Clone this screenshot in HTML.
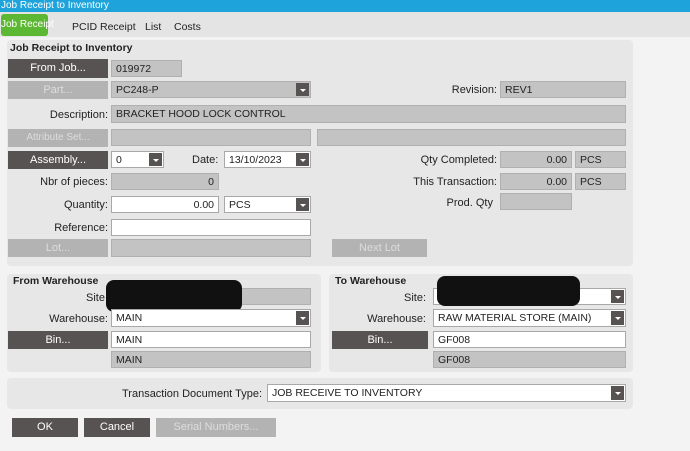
<!DOCTYPE html>
<html><head><style>
*{margin:0;padding:0;box-sizing:border-box}
body{width:690px;height:451px;overflow:hidden;background:#f3f3f3;font-family:"Liberation Sans",sans-serif;font-size:11px;color:#222;position:relative}
div{position:absolute;white-space:nowrap}
.pn{background:#e7e7e7;border-radius:4px}
.b{background:#575352;color:#fff;text-align:center;line-height:18px}
.lb{background:#b3b3b3;color:#ddd;text-align:center;line-height:18px}
.f{background:#c3c3c3;border:1px solid #b0b0b0;padding-left:4px;line-height:16px;font-size:10.5px}
.w{background:#fff;border:1px solid #a8a8a8;padding-left:4px;line-height:16px;font-size:10.5px}
.r{text-align:right;padding-right:4px}
.l{text-align:right;white-space:nowrap}
.a{right:1px;top:1px;bottom:1px;width:13px;background:#575352}
.a:after{content:"";position:absolute;left:4px;top:6px;border:3px solid transparent;border-top:3px solid #fff}
.h{font-weight:bold;font-size:10.5px}
.x{background:#111;border-radius:8px}
</style></head><body>
<div style="left:0;top:0;width:690px;height:12px;background:#1fa3db;color:#fff;font-size:10px;line-height:11px;padding-left:1px">Job Receipt to Inventory</div>
<div style="left:0;top:12px;width:690px;height:25px;background:#e4e4e4"></div>
<div style="left:1px;top:14px;width:47px;height:22px;background:#5cb833;border-radius:3px;color:#fff;line-height:21px;text-align:center;font-size:10px">Job Receipt</div>
<div style="left:72px;top:21px;font-size:10.5px">PCID Receipt</div>
<div style="left:145px;top:21px;font-size:10.5px">List</div>
<div style="left:174px;top:21px;font-size:10.5px">Costs</div>

<div class="pn" style="left:7px;top:40px;width:626px;height:226px"></div>
<div class="h" style="left:10px;top:42px">Job Receipt to Inventory</div>
<div class="b" style="left:8px;top:59px;width:100px;height:19px">From Job...</div>
<div class="f" style="left:111px;top:60px;width:71px;height:17px">019972</div>
<div class="lb" style="left:8px;top:81px;width:100px;height:18px">Part...</div>
<div class="f" style="left:111px;top:81px;width:200px;height:17px">PC248-P<div class="a"></div></div>
<div class="l" style="left:400px;top:84px;width:97px">Revision:</div>
<div class="f" style="left:500px;top:81px;width:126px;height:17px">REV1</div>
<div class="l" style="left:0;top:109px;width:108px">Description:</div>
<div class="f" style="left:111px;top:105px;width:515px;height:18px">BRACKET HOOD LOCK CONTROL</div>
<div class="lb" style="left:8px;top:129px;width:100px;height:18px;font-size:10px">Attribute Set...</div>
<div class="f" style="left:111px;top:129px;width:200px;height:17px"></div>
<div class="f" style="left:317px;top:129px;width:309px;height:17px"></div>
<div class="b" style="left:8px;top:151px;width:100px;height:18px">Assembly...</div>
<div class="w" style="left:111px;top:151px;width:53px;height:17px">0<div class="a"></div></div>
<div style="left:192px;top:154px">Date:</div>
<div class="w" style="left:224px;top:151px;width:87px;height:17px">13/10/2023<div class="a"></div></div>
<div class="l" style="left:380px;top:154px;width:117px">Qty Completed:</div>
<div class="f r" style="left:500px;top:151px;width:72px;height:17px">0.00</div>
<div class="f" style="left:575px;top:151px;width:51px;height:17px">PCS</div>
<div class="l" style="left:0;top:176px;width:108px">Nbr of pieces:</div>
<div class="f r" style="left:111px;top:173px;width:108px;height:17px">0</div>
<div class="l" style="left:380px;top:176px;width:117px">This Transaction:</div>
<div class="f r" style="left:500px;top:173px;width:72px;height:17px">0.00</div>
<div class="f" style="left:575px;top:173px;width:51px;height:17px">PCS</div>
<div class="l" style="left:380px;top:197px;width:113px">Prod. Qty</div>
<div class="f" style="left:500px;top:193px;width:72px;height:17px"></div>
<div class="l" style="left:0;top:199px;width:108px">Quantity:</div>
<div class="w r" style="left:111px;top:196px;width:108px;height:17px">0.00</div>
<div class="w" style="left:224px;top:196px;width:87px;height:17px">PCS<div class="a"></div></div>
<div class="l" style="left:0;top:222px;width:108px">Reference:</div>
<div class="w" style="left:111px;top:219px;width:200px;height:17px"></div>
<div class="lb" style="left:8px;top:239px;width:100px;height:18px">Lot...</div>
<div class="f" style="left:111px;top:239px;width:200px;height:18px"></div>
<div class="lb" style="left:332px;top:239px;width:95px;height:18px">Next Lot</div>

<div class="pn" style="left:7px;top:274px;width:314px;height:98px"></div>
<div class="h" style="left:13px;top:275px">From Warehouse</div>
<div class="l" style="left:0;top:292px;width:108px">Site:</div>
<div class="f" style="left:111px;top:288px;width:200px;height:17px"></div>
<div class="x" style="left:106px;top:280px;width:136px;height:32px"></div>
<div class="l" style="left:0;top:313px;width:108px">Warehouse:</div>
<div class="w" style="left:111px;top:309px;width:200px;height:18px">MAIN<div class="a"></div></div>
<div class="b" style="left:8px;top:331px;width:100px;height:18px">Bin...</div>
<div class="w" style="left:111px;top:331px;width:200px;height:17px">MAIN</div>
<div class="f" style="left:111px;top:351px;width:200px;height:17px">MAIN</div>

<div class="pn" style="left:329px;top:274px;width:304px;height:98px"></div>
<div class="h" style="left:335px;top:275px">To Warehouse</div>
<div class="l" style="left:330px;top:292px;width:96px">Site:</div>
<div class="w" style="left:433px;top:288px;width:193px;height:17px">M<div class="a"></div></div>
<div class="x" style="left:437px;top:276px;width:143px;height:30px"></div>
<div class="l" style="left:330px;top:313px;width:96px">Warehouse:</div>
<div class="w" style="left:433px;top:309px;width:193px;height:18px">RAW MATERIAL STORE (MAIN)<div class="a"></div></div>
<div class="b" style="left:332px;top:331px;width:96px;height:18px">Bin...</div>
<div class="w" style="left:433px;top:331px;width:193px;height:17px">GF008</div>
<div class="f" style="left:433px;top:351px;width:193px;height:17px">GF008</div>

<div class="pn" style="left:7px;top:378px;width:626px;height:31px"></div>
<div class="l" style="left:100px;top:388px;width:162px">Transaction Document Type:</div>
<div class="w" style="left:267px;top:384px;width:359px;height:18px">JOB RECEIVE TO INVENTORY<div class="a"></div></div>

<div class="b" style="left:12px;top:418px;width:66px;height:19px">OK</div>
<div class="b" style="left:84px;top:418px;width:66px;height:19px">Cancel</div>
<div class="lb" style="left:156px;top:418px;width:120px;height:19px">Serial Numbers...</div>
</body></html>
